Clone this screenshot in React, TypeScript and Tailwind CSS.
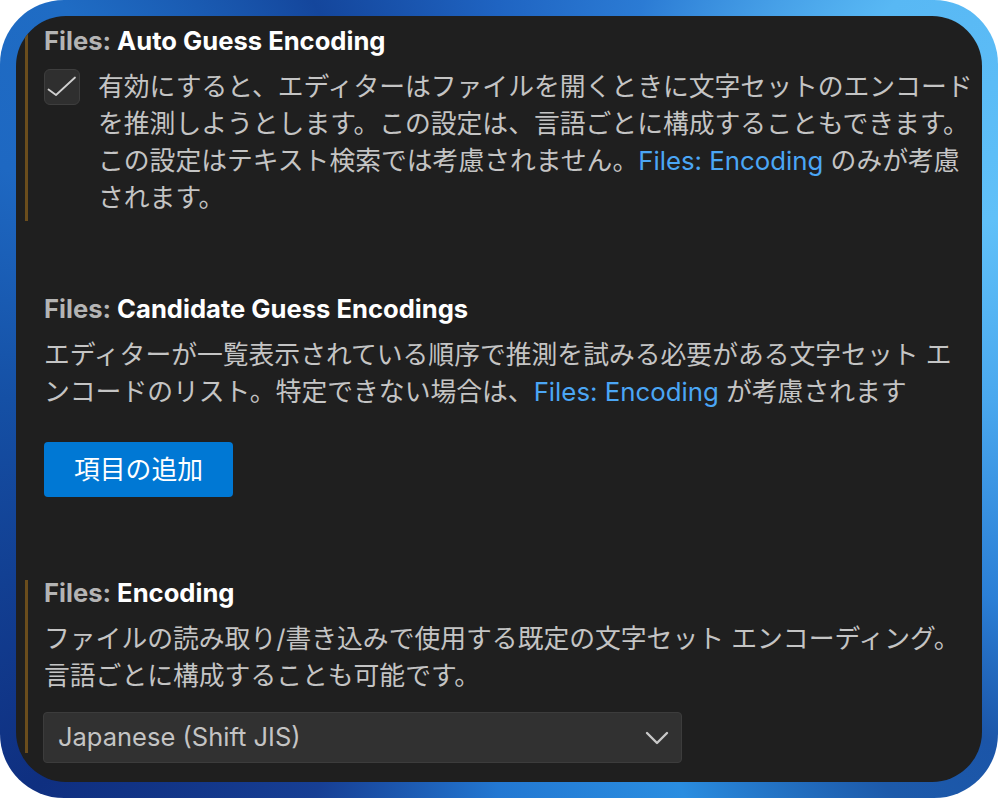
import type { ReactNode } from 'react'

function Title({ prefix, name }: { prefix: string; name: string }) {
  return (
    <div className="text-[25.6px] leading-[26px] font-bold whitespace-nowrap">
      <span className="text-[#b4b4b4]">{prefix} </span>
      <span className="text-white">{name}</span>
    </div>
  )
}

function Desc({ children, className }: { children: ReactNode; className?: string }) {
  return (
    <p className={'text-[25.8px] leading-[37px] text-[#c4c4c4] whitespace-nowrap ' + (className ?? '')}>{children}</p>
  )
}

function Link({ children }: { children: ReactNode }) {
  return <span className="text-[#4ba6f5]">{children}</span>
}

function Checkbox() {
  return (
    <div className="mt-px w-[36px] h-[36px] shrink-0 rounded-[6px] border border-[#3e3e3e] bg-[#2f2f2f]">
      <svg width="34" height="34" viewBox="0 0 34 34" fill="none">
        <polyline points="3.5,19.5 11,25 30,7.5" stroke="#cfcfcf" strokeWidth="1.8" strokeLinecap="round" strokeLinejoin="round" />
      </svg>
    </div>
  )
}

export default function App() {
  return (
    <div className="w-[998px] h-[798px] bg-white font-['Inter','Noto_Sans_CJK_JP',sans-serif]">
      <div className="h-full w-full rounded-[64px] p-4 bg-[conic-gradient(from_0deg_at_50%_50%,#1f64c2_0deg,#2b7bd4_20deg,#58b8f4_45deg,#60c0f8_70deg,#4aa8ee_90deg,#2b7fd6_112deg,#1b55a8_125deg,#1d5aaa_135deg,#2a8de0_155deg,#2378d2_180deg,#173f94_205deg,#0f2f80_230deg,#1550a5_270deg,#1e68c2_295deg,#1f6cc4_312deg,#14469c_335deg,#1f64c2_360deg)]">
        <div className="h-full w-full rounded-[50px] bg-[#1f1f1f] overflow-hidden flex flex-col">
          {/* Auto Guess Encoding (modified) */}
          <div className="flex">
            <div className="w-[3px] ml-[9px] shrink-0 bg-[#6b4d1c]" />
            <div className="pl-[16px] pt-[12px] pb-[5px]">
              <Title prefix="Files:" name="Auto Guess Encoding" />
              <div className="mt-[14px] flex">
                <Checkbox />
                <Desc className="ml-[18px]">
                  有効にすると、エディターはファイルを開くときに文字セットのエンコード
                  <br />
                  を推測しようとします。この設定は、言語ごとに構成することもできます。
                  <br />
                  この設定はテキスト検索では考慮されません。<Link>Files: Encoding</Link> のみが考慮
                  <br />
                  されます。
                </Desc>
              </div>
            </div>
          </div>

          {/* Candidate Guess Encodings */}
          <div className="mt-[75px] pl-[28px]">
            <Title prefix="Files:" name="Candidate Guess Encodings" />
            <Desc className="mt-[14px]">
              エディターが一覧表示されている順序で推測を試みる必要がある文字セット エ
              <br />
              ンコードのリスト。特定できない場合は、<Link>Files: Encoding</Link> が考慮されます
            </Desc>
            <button className="mt-[32px] w-[189px] h-[55px] rounded-[4px] bg-[#0078d4] text-white text-[25.8px] leading-none">
              項目の追加
            </button>
          </div>

          {/* Encoding (modified) */}
          <div className="mt-[83px] flex">
            <div className="w-[3px] h-[173px] ml-[9px] shrink-0 bg-[#6b4d1c]" />
            <div className="pl-[16px]">
              <Title prefix="Files:" name="Encoding" />
              <Desc className="mt-[14px]">
                ファイルの読み取り/書き込みで使用する既定の文字セット エンコーディング。
                <br />
                言語ごとに構成することも可能です。
              </Desc>
              <div className="mt-[18px] w-[639px] h-[51px] -ml-px flex items-center justify-between pl-[14px] pr-[12px] rounded-[4px] border border-[#3c3c3c] bg-[#313131]">
                <span className="text-[25.5px] text-[#c4c4c4]">Japanese (Shift JIS)</span>
                <svg width="24" height="14" viewBox="0 0 24 14" fill="none">
                  <path d="M2 2 L12 12 L22 2" stroke="#c8c8c8" strokeWidth="2.4" strokeLinecap="round" strokeLinejoin="round" />
                </svg>
              </div>
            </div>
          </div>
        </div>
      </div>
    </div>
  )
}
